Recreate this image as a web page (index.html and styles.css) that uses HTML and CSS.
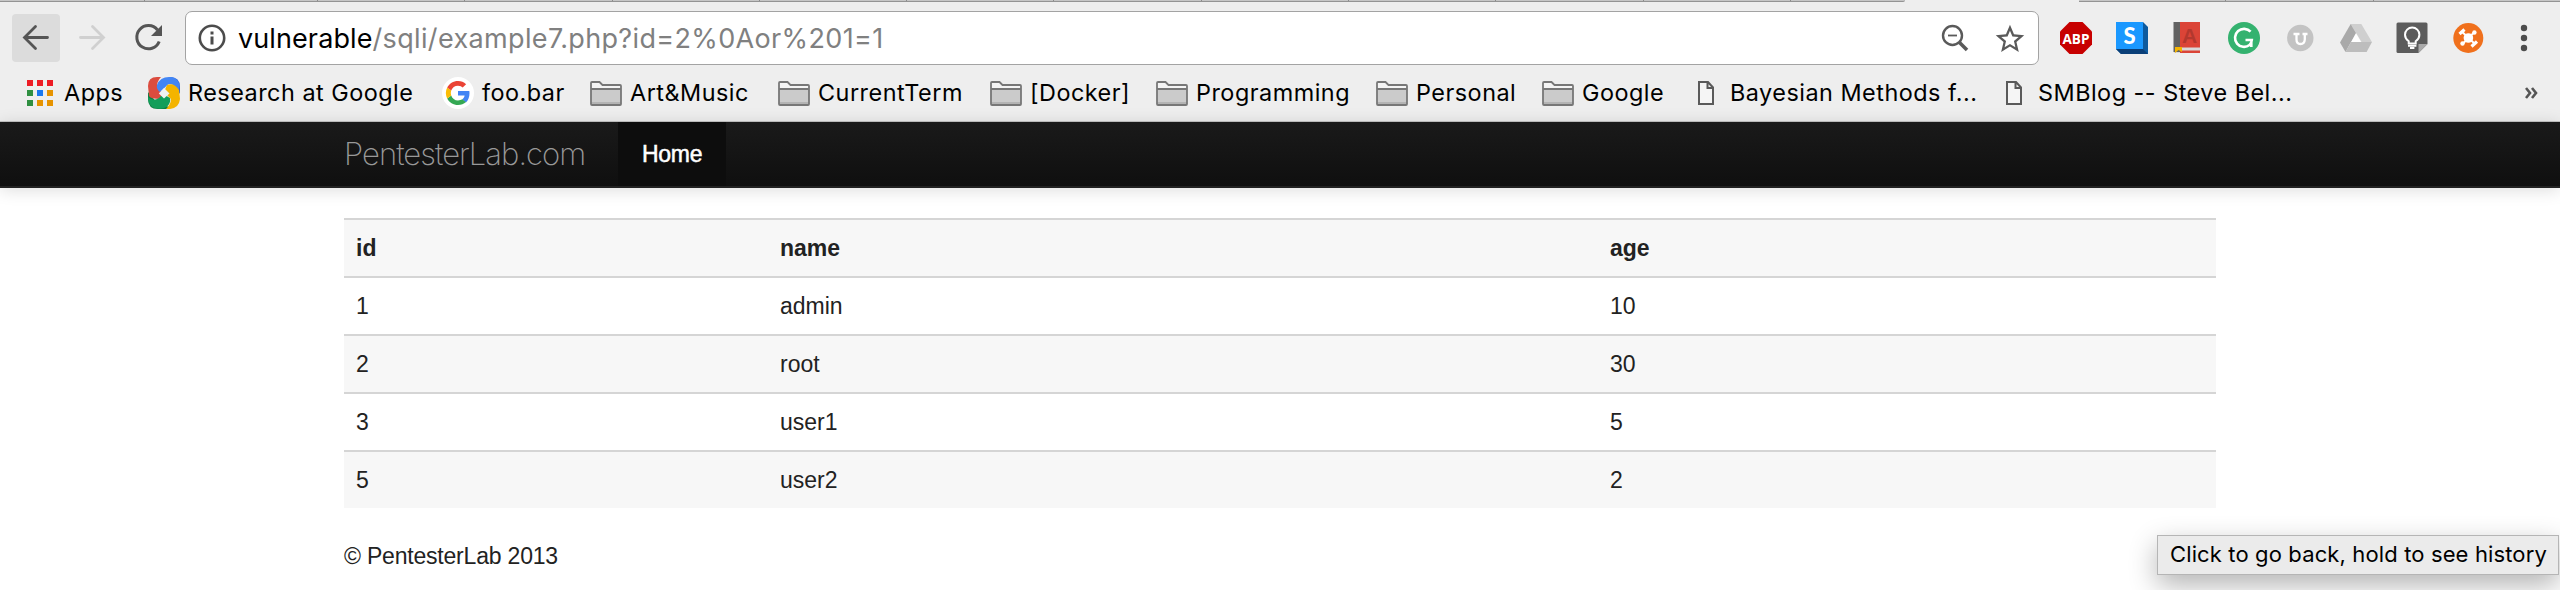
FILE: index.html
```html
<!DOCTYPE html>
<html lang="en">
<head>
<meta charset="utf-8">
<title>PentesterLab.com</title>
<link rel="stylesheet" href="styles.css">
</head>
<body>
<svg width="0" height="0" class="defs">
  <symbol id="folder" viewBox="0 0 32 25">
    <path d="M1 23V2Q1 1 2 1H9.5L12.5 4H30Q31 4 31 5V23Q31 24 30 24H2Q1 24 1 23Z" fill="#f4f4f4"/>
    <rect x="1" y="8" width="30" height="16" fill="#cbcbcb"/>
    <rect x="1" y="21" width="30" height="3" fill="#b3b3b3"/>
    <path d="M1 8H31M1 23V2Q1 1 2 1H9.5L12.5 4H30Q31 4 31 5V23Q31 24 30 24H2Q1 24 1 23Z" fill="none" stroke="#777" stroke-width="1.8"/>
  </symbol>
  <symbol id="page" viewBox="0 0 16 24">
    <path d="M1 1H10L15 6.5V23H1ZM9.5 1V7H15" fill="#f5f5f5" stroke="#5a5a5a" stroke-width="2"/>
  </symbol>
</svg>

<header class="browser">
  <div class="tabstrip">
    <div class="tabs tabs-left"><i></i><i></i><i></i><i></i><i></i><i></i><i></i><i></i><i></i><i></i><i></i><i></i></div>
    <div class="tabs tabs-right"><i></i><i></i></div>
  </div>
  <div class="toolbar">
    <button class="nav-btn active" aria-label="Back"><svg width="48" height="48" viewBox="0 0 48 48"><path d="M35.500 23.500H13M23.500 12.500L12.500 23.500L23.500 34.500" fill="none" stroke="#555" stroke-width="2.800" stroke-linecap="round" stroke-linejoin="miter"/></svg></button>
    <button class="nav-btn" aria-label="Forward"><svg width="48" height="48" viewBox="0 0 48 48"><path d="M11.500 23.500H34M23.500 12.500L34.500 23.500L23.500 34.500" fill="none" stroke="#d0d0d0" stroke-width="2.800" stroke-linecap="round"/></svg></button>
    <button class="nav-btn" aria-label="Reload"><svg width="48" height="48" viewBox="0 0 48 48"><path d="M31.500 16A11.600 11.600 0 1 0 33.200 27.500" fill="none" stroke="#555" stroke-width="3"/><path d="M36 11V22H25Z" fill="#555"/></svg></button>
    <div class="omnibox">
      <svg class="info" width="28" height="28" viewBox="0 0 28 28"><circle cx="14" cy="14" r="12.200" fill="none" stroke="#4c4c4c" stroke-width="2.600"/><rect x="12.500" y="12.500" width="3" height="8" fill="#4c4c4c"/><rect x="12.500" y="7.500" width="3" height="3" fill="#4c4c4c"/></svg>
      <span class="url"><span class="host">vulnerable</span><span class="path">/sqli/example7.php?id=2%0Aor%201=1</span></span>
      <svg class="zoom" width="28" height="28" viewBox="0 0 28 28"><circle cx="11.500" cy="11.500" r="9.500" fill="none" stroke="#5a5a5a" stroke-width="2.400"/><path d="M7 11.500H16" stroke="#5a5a5a" stroke-width="1.800"/><path d="M18 18L26 26" stroke="#5a5a5a" stroke-width="3.600"/></svg>
      <svg class="star" width="30" height="30" viewBox="0 0 24 24"><path fill="#5a5a5a" d="M22 9.240l-7.190-.62L12 2 9.190 8.630 2 9.240l5.460 4.730L5.820 21 12 17.270 18.180 21l-1.630-7.030L22 9.240zM12 15.400l-3.760 2.270 1-4.280-3.320-2.880 4.380-.38L12 6.100l1.710 4.040 4.380.38-3.320 2.880 1 4.280L12 15.400z" transform="translate(-1.700 -.8) scale(1.140)"/></svg>
    </div>
    <div class="extensions">
      <svg width="32" height="32" viewBox="0 0 32 32"><path d="M9.500 0H22.500L32 9.500V22.500L22.500 32H9.500L0 22.500V9.500Z" fill="#c70000"/><text x="16" y="21.800" text-anchor="middle" class="abp" textLength="27" lengthAdjust="spacingAndGlyphs">ABP</text></svg>
      <svg width="32" height="32" viewBox="0 0 32 32"><path d="M27 0L32 5V32H5L0 27Z" fill="#0d5a9e"/><path d="M0 27H27L32 32H5Z" fill="#0a3f78"/><rect width="27" height="27" fill="#1a98ff"/><text x="13.500" y="21.500" text-anchor="middle" class="s-mark">S</text></svg>
      <svg width="32" height="32" viewBox="0 0 32 32"><rect x="2" y="0" width="26" height="31" fill="#d9d9d9"/><rect x="8" y="0" width="20" height="25.500" fill="#db4437"/><rect x="8" y="28.500" width="20" height="2.500" fill="#db4437"/><rect x="1.500" y="0" width="6.500" height="30" fill="#616161"/><text x="17.500" y="20.500" text-anchor="middle" class="book-a">A</text><path d="M3 25H10V30L6.500 28L3 31Z" fill="#f4b400"/></svg>
      <svg width="32" height="32" viewBox="0 0 32 32"><circle cx="16" cy="16" r="16" fill="#34b26f"/><path d="M22.600 9.700A9 9 0 1 0 21.500 23Q23.500 21.500 23.800 18H17.500M23.300 25V20" fill="none" stroke="#fff" stroke-width="2.600"/></svg>
      <svg width="32" height="32" viewBox="0 0 32 32"><circle cx="16.300" cy="16" r="13.200" fill="#c3c3c3"/><path d="M9.500 12H15.500M18.500 12H23.500M12.500 12V17.500Q12.500 22 16.500 22T20.800 17.500V12" fill="none" stroke="#fff" stroke-width="2.300"/></svg>
      <svg width="32" height="32" viewBox="0 0 32 32"><path d="M10.700 2H21.300L32 20H21.500Z" fill="#cfcfcf"/><path d="M10.700 2L16 11L5.500 30L0 20.500Z" fill="#a9a9a9"/><path d="M11 20H32L26.600 30H5.500Z" fill="#bdbdbd"/><path d="M16 11.500L21 20H11.300Z" fill="#fff"/></svg>
      <svg width="32" height="32" viewBox="0 0 32 32"><path d="M2 .5H30Q31.500 .5 31.500 2V22L22.500 31H2Q.5 31 .5 29.500V2Q.5 .5 2 .5Z" fill="#5c5c5c"/><path d="M22.500 22H31.500L22.500 31Z" fill="#aaa"/><path d="M12.700 19.200Q9 16.500 9 12.700A7.200 7.200 0 0 1 23.400 12.700Q23.400 16.500 19.700 19.200V21.500H12.700Z" fill="none" stroke="#fff" stroke-width="2"/><path d="M12 23.700H20.400M14 26H18.400" stroke="#fff" stroke-width="2"/></svg>
      <svg width="32" height="32" viewBox="0 0 32 32"><circle cx="16.300" cy="16" r="15" fill="#f0701c"/><path d="M10 9.700L23 22M22.500 10L10 22.500" stroke="#fff" stroke-width="2"/><circle cx="16.400" cy="16" r="4.800" fill="#fff"/><path d="M7.500 12L12.500 7.500M19.500 24.500L25 19.500" stroke="#fff" stroke-width="3.200"/><circle cx="22.400" cy="10.500" r="2.200" fill="#fff"/><circle cx="10.500" cy="21.500" r="2.200" fill="#fff"/></svg>
    </div>
    <svg class="menu" width="8" height="28" viewBox="0 0 8 28"><g fill="#4c4c4c"><circle cx="4" cy="4" r="3.200"/><circle cx="4" cy="14" r="3.200"/><circle cx="4" cy="24" r="3.200"/></g></svg>
  </div>
  <nav class="bookmarks">
    <a class="bm apps"><svg width="26" height="26" viewBox="0 0 26 26"><path d="M0 0h6v6H0zM10 0h6v6h-6zM20 0h6v6h-6z" fill="#ed1c24"/><path d="M0 10h6v6H0zM0 20h6v6H0z" fill="#2f8f41"/><path d="M10 10h6v6h-6z" fill="#1a78f0"/><path d="M20 10h6v6h-6zM10 20h6v6h-6zM20 20h6v6h-6z" fill="#e69300"/></svg><span>Apps</span></a>
    <a class="bm research"><svg width="32" height="32" viewBox="0 0 32 32">
      <path d="M22 0Q32 0 32 10V17L24 6Z" fill="#3367d6"/><path d="M0 22V15L10 27L22 30V32H10Q0 32 0 22Z" fill="#0b8043"/>
      <path d="M0 9Q0 0 9 0H13Q9 4 9 10L17 18L13 22Q2 22 1 19Z" fill="#db4c3f"/>
      <path d="M9 8Q12 0 21 0H24Q31 2 31.500 9L31 13Q24 5 20 7.500L12 15Q8 12 9 8Z" fill="#4285f4"/>
      <path d="M19 8Q26 5 31 13L32 22Q31 31 22 32H18Q23 27 23 22L16 15Z" fill="#f4b400"/>
      <path d="M0 20Q5 25 11 21L15 17L22 21Q23 27 18 30Q14 33 7 31Q0 29 0 20Z" fill="#129e5a"/>
      <path d="M16 11L21.500 16.500L16 21.500L10.800 16.500Z" fill="#f1f1f1"/></svg><span>Research at Google</span></a>
    <a class="bm foo"><svg width="32" height="32" viewBox="0 0 32 32"><circle cx="16" cy="16" r="16" fill="#fff"/><g transform="translate(4 4)"><path fill="#4285f4" d="M23.500 12.300c0-.9-.1-1.500-.2-2.200H12v4.500h6.600c-.1 1.100-.9 2.800-2.500 3.900l3.800 3c2.300-2.200 3.600-5.300 3.600-9.200z"/><path fill="#34a853" d="M12 24c3.200 0 6-1.100 7.900-2.900l-3.800-2.900c-1 .7-2.400 1.200-4.100 1.200-3.200 0-5.900-2.100-6.800-5l-4 3C3.200 21.300 7.300 24 12 24z"/><path fill="#fbbc05" d="M5.200 14.400a7.400 7.400 0 0 1 0-4.800l-4-3a12 12 0 0 0 0 10.800z"/><path fill="#ea4335" d="M12 4.700c2.300 0 3.800 1 4.700 1.800l3.400-3.300A11.600 11.600 0 0 0 12 0C7.300 0 3.200 2.700 1.200 6.600l4 3c.9-2.900 3.600-4.900 6.800-4.900z"/></g></svg><span>foo.bar</span></a>
    <a class="bm art"><svg width="32" height="25"><use href="#folder"/></svg><span>Art&amp;Music</span></a>
    <a class="bm term"><svg width="32" height="25"><use href="#folder"/></svg><span>CurrentTerm</span></a>
    <a class="bm docker"><svg width="32" height="25"><use href="#folder"/></svg><span>[Docker]</span></a>
    <a class="bm prog"><svg width="32" height="25"><use href="#folder"/></svg><span>Programming</span></a>
    <a class="bm personal"><svg width="32" height="25"><use href="#folder"/></svg><span>Personal</span></a>
    <a class="bm google"><svg width="32" height="25"><use href="#folder"/></svg><span>Google</span></a>
    <a class="bm doc"><svg width="16" height="24"><use href="#page"/></svg><span>Bayesian Methods f...</span></a>
    <a class="bm doc last"><svg width="16" height="24"><use href="#page"/></svg><span>SMBlog -- Steve Bel...</span></a>
    <svg class="more" width="13" height="12" viewBox="0 0 13 12"><path d="M1 1L5 6L1 11M7 1L11 6L7 11" fill="none" stroke="#555" stroke-width="2.600"/></svg>
  </nav>
</header>

<div class="navbar">
  <a class="brand">PentesterLab.com</a>
  <a class="nav-link">Home</a>
</div>

<main class="container">
  <table class="table">
    <thead><tr><th class="c-id">id</th><th class="c-name">name</th><th>age</th></tr></thead>
    <tbody>
      <tr><td>1</td><td>admin</td><td>10</td></tr>
      <tr><td>2</td><td>root</td><td>30</td></tr>
      <tr><td>3</td><td>user1</td><td>5</td></tr>
      <tr><td>5</td><td>user2</td><td>2</td></tr>
    </tbody>
  </table>
  <footer class="footer">© PentesterLab 2013</footer>
</main>
<div class="tooltip">Click to go back, hold to see history</div>
</body>
</html>
```
FILE: styles.css
```css
* { box-sizing: border-box; }
body {
  margin: 0;
  height: 590px;
  overflow: hidden;
  background: #fff;
  color: #222;
  font: 23px/36px "Liberation Sans", Arial, sans-serif;
}
svg { display: block; flex: none; }
.defs { position: absolute; }

/* Browser chrome */
.browser {
  height: 122px;
  background: #eee;
  border-bottom: 1px solid #c4c4c4;
  font-family: Inter, "Liberation Sans", sans-serif;
  color: #000;
}
.tabstrip { display: flex; height: 2px; justify-content: space-between; }
.tabs { display: flex; background: #c6c6c6; border-bottom: 1px solid #949494; }
.tabs i { width: 147.300px; height: 1px; border-right: 1px solid #8c8c8c; }
.tabs-left { width: 1905px; border-bottom-right-radius: 2px; }
.tabs-left i:first-child { width: 145px; }
.tabs-left i:nth-child(2) { width: 173px; }
.tabs-right { width: 481px; }
.toolbar { display: flex; align-items: center; height: 72px; padding-left: 12px; }
.nav-btn {
  width: 48px;
  height: 48px;
  margin-right: 9px;
  padding: 0;
  border: 0;
  border-radius: 4px;
  background: transparent;
}
.nav-btn.active { background: #dcdcdc; }
.omnibox {
  display: flex;
  align-items: center;
  width: 1854px;
  height: 54px;
  margin-left: 2px;
  padding-left: 12px;
  border: 1px solid #a3a3a3;
  border-radius: 7px;
  background: #fff;
}
.url { margin-left: 12px; padding-top: 2px; font-size: 27px; letter-spacing: .1px; white-space: pre; }
.path { color: #808080; letter-spacing: .35px; }
.zoom { margin-left: auto; }
.star { margin: 0 13px 0 26px; }
.extensions { display: flex; gap: 24px; margin-left: 21px; }
.abp { font: bold 15px "Open Sans", sans-serif; fill: #fff; }
.s-mark { font: 900 22px Lato, sans-serif; fill: #fff; }
.book-a { font: bold 21px "Liberation Sans", sans-serif; fill: #b3382e; }
.menu { margin-left: 36px; }

.bookmarks { display: flex; height: 38px; align-items: center; padding-left: 27px; }
.bm {
  display: flex;
  align-items: center;
  gap: 8px;
  font-size: 23.400px;
  line-height: 38px;
  letter-spacing: .5px;
  white-space: nowrap;
}
.apps { width: 121px; gap: 11px; }
.research { width: 294px; }
.foo { width: 148px; }
.art { width: 188px; }
.term { width: 212px; }
.docker { width: 166px; }
.prog { width: 220px; }
.personal { width: 166px; }
.google { width: 156px; }
.doc { width: 308px; gap: 16px; }
.more { margin-left: auto; margin-right: 22px; }

/* Site navigation */
.navbar {
  display: flex;
  height: 66px;
  padding-left: 344px;
  background: linear-gradient(#1a1a1a, #0f0f0f);
  border-bottom: 2px solid #222;
  box-shadow: 0 2px 16px rgba(0, 0, 0, .14);
}
.brand {
  width: 274px;
  font: 200 31px/64px Inter, sans-serif;
  letter-spacing: -.95px;
  color: #999;
}
.nav-link {
  width: 108px;
  padding-left: 24px;
  background: #0d0d0d;
  color: #fff;
  line-height: 64px;
  letter-spacing: -.3px;
  -webkit-text-stroke: .5px #fff;
}

/* Results */
.container { width: 1872px; margin: 30px 0 0 344px; }
.table { width: 100%; table-layout: fixed; border-collapse: separate; border-spacing: 0; }
.table th, .table td { height: 58px; padding: 0 12px; border-top: 2px solid #d5d5d5; text-align: left; line-height: 36px; }
.c-id { width: 424px; }
.c-name { width: 830px; }
.table th, .table tbody tr:nth-child(even) td { background: #f7f7f7; }
.footer { margin-top: 30px; letter-spacing: -.2px; }

.tooltip {
  position: absolute;
  left: 2157px;
  top: 535px;
  width: 402px;
  height: 40px;
  padding-left: 12px;
  border: 1px solid #b5b5b5;
  background: #ebebeb;
  box-shadow: 0 10px 28px rgba(0, 0, 0, .3);
  color: #000;
  font: 22px/37px Inter, sans-serif;
  letter-spacing: .13px;
  white-space: nowrap;
}
```
